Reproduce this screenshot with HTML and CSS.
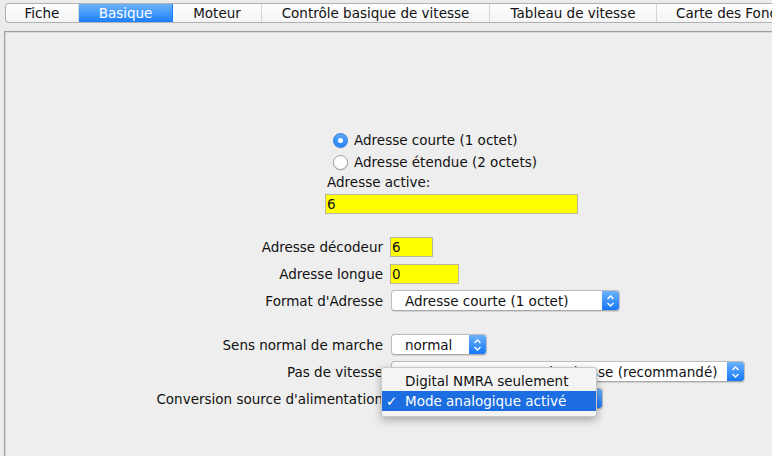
FILE: index.html
```html
<!DOCTYPE html>
<html lang="fr">
<head>
<meta charset="utf-8">
<link rel="stylesheet" href="styles.css">
</head>
<body>
<div class="tabs">
  <div class="tab t-fiche">Fiche</div>
  <div class="tab t-basique on">Basique</div>
  <div class="tab t-moteur">Moteur</div>
  <div class="tab t-ctrl">Contrôle basique de vitesse</div>
  <div class="tab t-tab">Tableau de vitesse</div>
  <div class="tab t-carte">Carte des Fonctions</div>
</div>
<div class="panel">
  <div class="addr">
    <div class="radio"><span class="rb on"></span>Adresse courte (1 octet)</div>
    <div class="radio"><span class="rb"></span>Adresse étendue (2 octets)</div>
    <div class="active-lbl">Adresse active:</div>
    <div class="field wide">6</div>
  </div>
  <div class="form">
    <div class="row r-dec"><div class="lbl">Adresse décodeur</div><div class="field w-dec">6</div></div>
    <div class="row r-long"><div class="lbl">Adresse longue</div><div class="field w-long">0</div></div>
    <div class="row r-fmt"><div class="lbl">Format d'Adresse</div>
      <div class="sel s-fmt"><span class="txt">Adresse courte (1 octet)</span><span class="btn"><svg width="9" height="14" viewBox="0 0 9 14"><path d="M1.5 5 L4.5 2 L7.5 5 M1.5 9 L4.5 12 L7.5 9" fill="none" stroke="#fff" stroke-width="1.4"/></svg></span></div>
    </div>
    <div class="row r-sens"><div class="lbl">Sens normal de marche</div>
      <div class="sel s-sens"><span class="txt">normal</span><span class="btn"><svg width="9" height="14" viewBox="0 0 9 14"><path d="M1.5 5 L4.5 2 L7.5 5 M1.5 9 L4.5 12 L7.5 9" fill="none" stroke="#fff" stroke-width="1.4"/></svg></span></div>
    </div>
    <div class="row r-pas"><div class="lbl">Pas de vitesse</div>
      <div class="sel s-pas"><span class="txt">14, 28 ou 128 crans de vitesse (recommandé)</span><span class="btn"><svg width="9" height="14" viewBox="0 0 9 14"><path d="M1.5 5 L4.5 2 L7.5 5 M1.5 9 L4.5 12 L7.5 9" fill="none" stroke="#fff" stroke-width="1.4"/></svg></span></div>
    </div>
    <div class="row r-conv"><div class="lbl">Conversion source d'alimentation</div>
      <div class="sel s-conv"><span class="txt">Mode analogique activé</span><span class="btn"><svg width="9" height="14" viewBox="0 0 9 14"><path d="M1.5 5 L4.5 2 L7.5 5 M1.5 9 L4.5 12 L7.5 9" fill="none" stroke="#fff" stroke-width="1.4"/></svg></span></div>
    </div>
  </div>
</div>
<div class="popup">
  <div class="item"><span class="chk"></span>Digital NMRA seulement</div>
  <div class="item sel-item"><span class="chk">✓</span>Mode analogique activé</div>
</div>
</body>
</html>
```
FILE: styles.css
```css
html, body {
  margin: 0;
  padding: 0;
  background: #ececec;
  font-family: "DejaVu Sans", "Liberation Sans", sans-serif;
  font-size: 13.5px;
  color: #111;
  overflow: hidden;
  width: 772px;
  height: 456px;
}

.tabs {
  display: flex;
  margin: 3px 0 0 5px;
  height: 20px;
  box-sizing: border-box;
  background: linear-gradient(#ffffff, #f4f4f4);
  border: 1px solid #b0b0b0;
  border-right: none;
  border-radius: 4px 0 0 4px;
  white-space: nowrap;
  overflow: hidden;
}

.tab {
  flex: none;
  box-sizing: border-box;
  text-align: center;
  line-height: 18px;
  border-right: 1px solid #d6d6d6;
}

.tab.on {
  background: linear-gradient(#6db3fb, #1b7ffa);
  color: #fff;
  border-right-color: #1b7ffa;
}

.t-fiche { width: 73px; }
.t-basique { width: 94px; }
.t-moteur { width: 89px; }
.t-ctrl { width: 228px; }
.t-tab { width: 167px; }
.t-carte { width: 160px; text-align: left; padding-left: 19px; }

.panel {
  margin: 8px 0 0 4px;
  height: 500px;
  border-top: 1px solid #9c9c9c;
  border-left: 1px solid #9c9c9c;
  box-shadow: inset 1px 1px 0 #dadada;
  background: #eeeeee;
}

.addr {
  padding-top: 97px;
  margin-left: 320px;
  display: flex;
  flex-direction: column;
}

.radio {
  display: flex;
  align-items: center;
  height: 22px;
  padding-left: 8px;
  gap: 6px;
}

.rb {
  width: 15px;
  height: 15px;
  box-sizing: border-box;
  border-radius: 50%;
  background: #fff;
  border: 1px solid #9f9f9f;
  box-shadow: 0 0.5px 1px rgba(0,0,0,0.15);
  display: flex;
  align-items: center;
  justify-content: center;
}

.rb.on {
  background: linear-gradient(#5aa4fb, #2a86f8);
  border-color: #2f7fe6;
}

.rb.on::after {
  content: "";
  width: 5px;
  height: 5px;
  border-radius: 50%;
  background: #fff;
}

.active-lbl {
  height: 18px;
  line-height: 18px;
  padding-left: 2px;
}

.field {
  box-sizing: border-box;
  height: 20px;
  line-height: 18px;
  background: #ffff00;
  border: 1px solid #b8b8a0;
  padding-left: 1px;
}

.field.wide {
  margin-top: 3px;
  width: 253px;
}

.w-dec { width: 43px; }
.w-long { width: 69px; }

.form {
  margin-top: 23px;
  display: flex;
  flex-direction: column;
}

.row {
  display: flex;
  align-items: center;
}

.lbl {
  width: 385px;
  box-sizing: border-box;
  padding-right: 7px;
  text-align: right;
  white-space: nowrap;
}

.r-long { margin-top: 7px; }
.r-fmt { margin-top: 6px; }
.r-sens { margin-top: 23px; }
.r-pas { margin-top: 6px; }
.r-conv { margin-top: 6px; }

.sel {
  margin-left: 1px;
  display: flex;
  height: 21px;
  box-sizing: border-box;
  border: 1px solid #bdbdbd;
  border-bottom-color: #a9a9a9;
  border-radius: 4px;
  background: #fff;
  overflow: hidden;
  box-shadow: 0 0.5px 1px rgba(0,0,0,0.12);
}

.sel .txt {
  flex: 1;
  padding-left: 13px;
  line-height: 20px;
  white-space: nowrap;
  overflow: hidden;
}

.sel .btn {
  flex: none;
  width: 17px;
  background: linear-gradient(#6ab2fb, #1677f8);
  display: flex;
  align-items: center;
  justify-content: center;
}

.s-fmt { width: 229px; }
.s-sens { width: 96px; }
.s-pas { width: 354px; }
.s-conv { width: 212px; }

.popup {
  position: absolute;
  left: 381px;
  top: 367px;
  width: 216px;
  padding: 3px 0 5px;
  background: #f4f4f4;
  border: 1px solid #c8c8c8;
  box-sizing: border-box;
  border-radius: 3px;
  box-shadow: 0 3px 8px rgba(0,0,0,0.3);
}

.item {
  height: 20px;
  line-height: 20px;
  display: flex;
  white-space: nowrap;
}

.chk {
  width: 23px;
  padding-left: 4px;
  box-sizing: border-box;
}

.sel-item {
  background: #1b6de0;
  color: #fff;
}
```
